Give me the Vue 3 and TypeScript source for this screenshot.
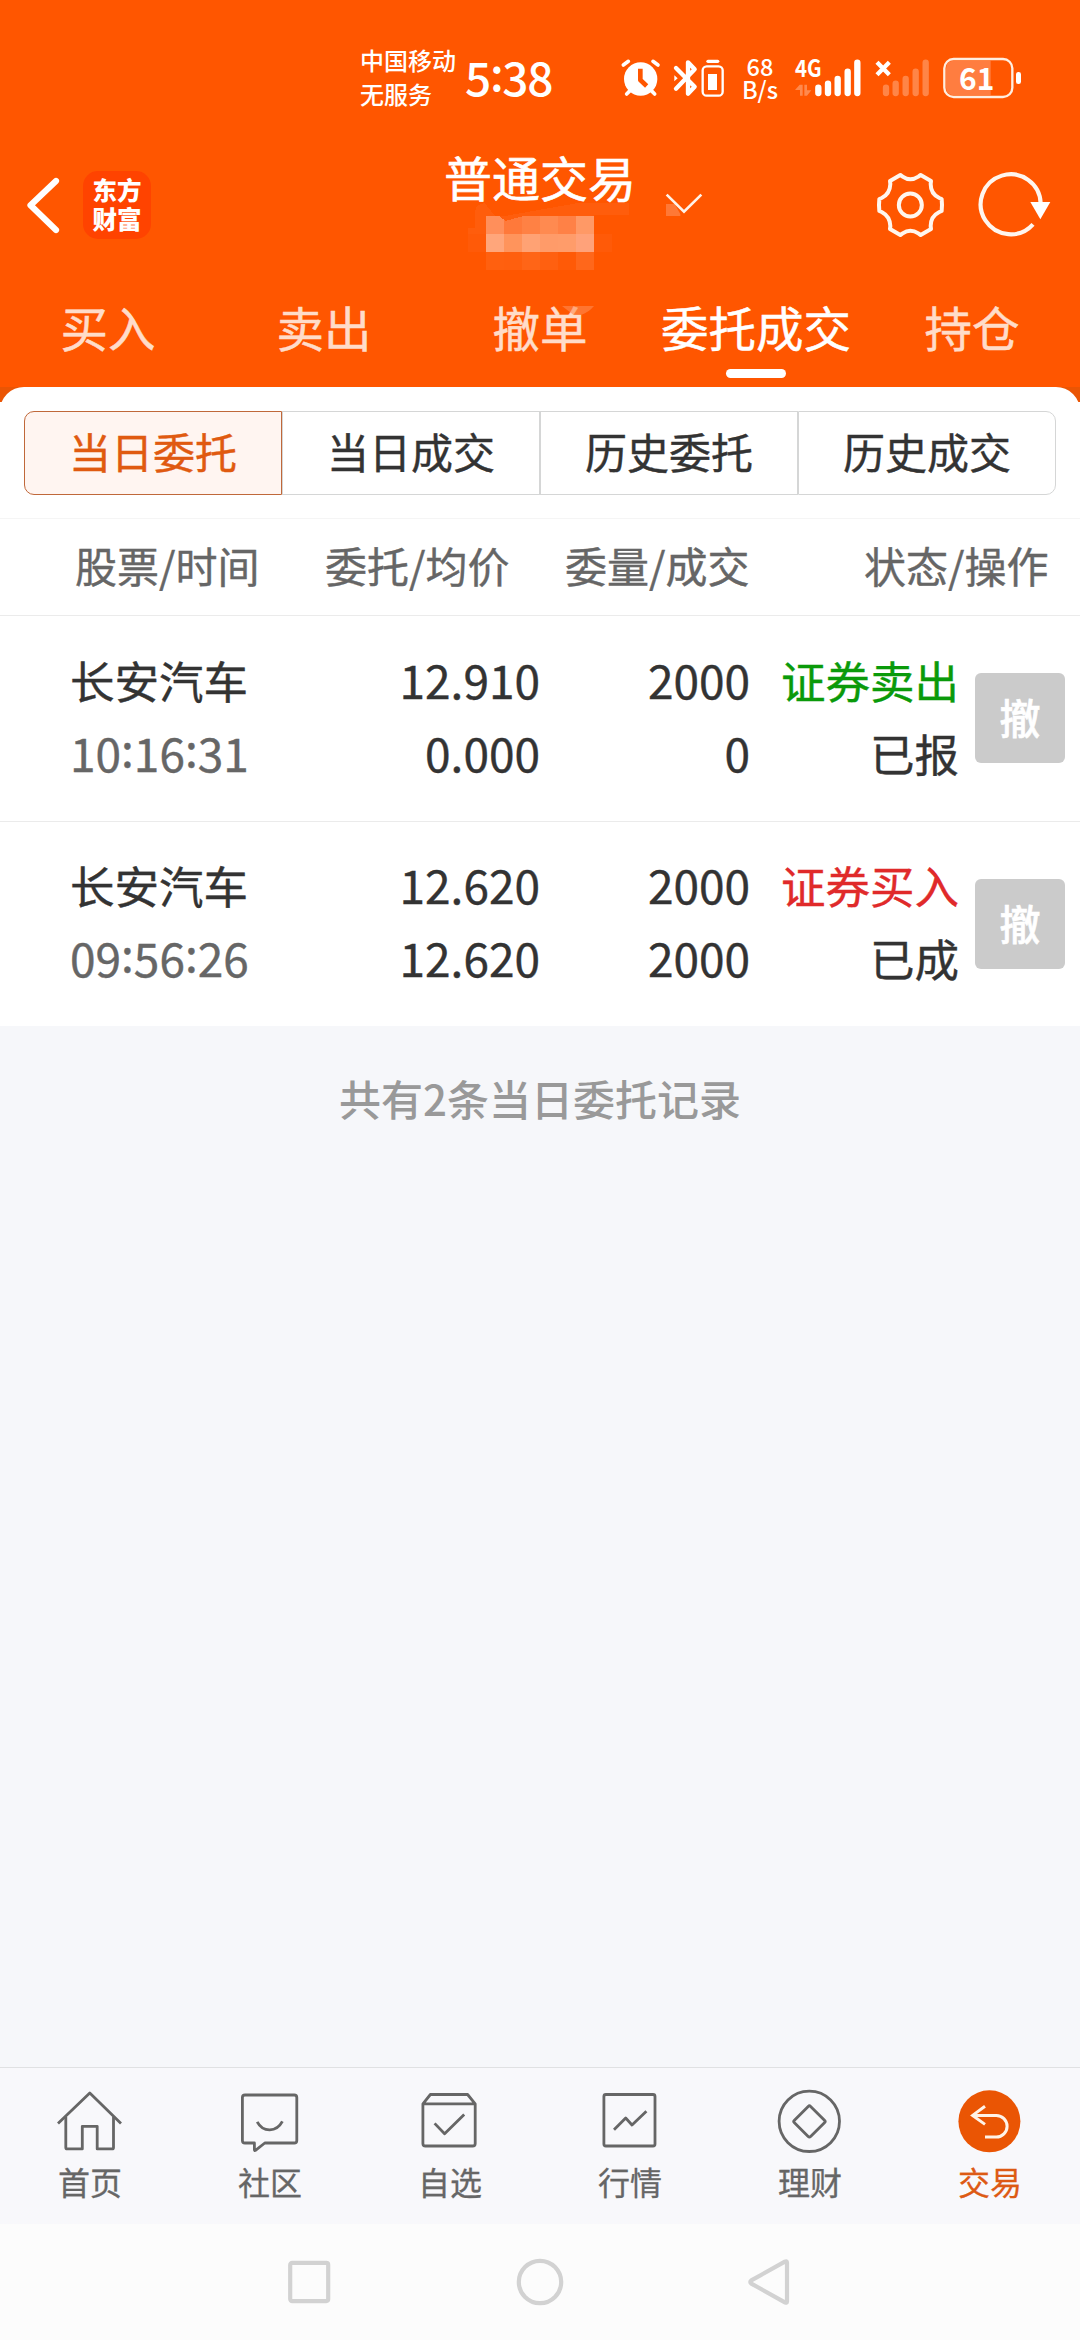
<script setup lang="ts">
import { ref } from 'vue'

interface Order {
  name: string
  time: string
  price: string
  avg: string
  qty: string
  filled: string
  side: string
  kind: 'sell' | 'buy'
  state: string
}

const tabs = ['买入', '卖出', '撤单', '委托成交', '持仓']
const activeTab = ref(3)

const segments = ['当日委托', '当日成交', '历史委托', '历史成交']
const activeSegment = ref(0)

const orders: Order[] = [
  { name: '长安汽车', time: '10:16:31', price: '12.910', avg: '0.000', qty: '2000', filled: '0', side: '证券卖出', kind: 'sell', state: '已报' },
  { name: '长安汽车', time: '09:56:26', price: '12.620', avg: '12.620', qty: '2000', filled: '2000', side: '证券买入', kind: 'buy', state: '已成' },
]

const mosaic = [
  ['#ff8f5b', '#ff793a', '#ff8144', '#ff8a50', '#ff8146', '#ff9966'],
  ['#ffa67b', '#ff945c', '#ffa274', '#ff9b69', '#ff9c6a', '#ffa27a'],
  ['#ff600f', '#ff5f0e', '#ff6517', '#ff6010', '#ff5a07', '#ff671b'],
]

const navItems = ['首页', '社区', '自选', '行情', '理财', '交易']
</script>

<template>
  <div class="screen">
    <header class="top">
      <div class="status">
        <div class="carrier"><span>中国移动</span><span>无服务</span></div>
        <div class="clock">5<i>:</i>38</div>
        <svg class="s-alarm" width="40" height="44" viewBox="60 78 120 132" fill="none" stroke="#fff" stroke-linecap="round">
          <circle cx="122" cy="147" r="50" fill="#fff" stroke="none" />
          <path d="M70 105L85 94M174 105L159 94M80 192L90 182M164 192L154 182" stroke-width="11" />
          <path d="M121 116V150L140 168" stroke="#ff5600" stroke-width="14" stroke-linecap="butt" stroke-linejoin="round" />
        </svg>
        <svg class="s-bt" width="54" height="44" viewBox="216 78 162 132" fill="none" stroke="#fff" stroke-linecap="round" stroke-linejoin="round">
          <path d="M228 114L284 170L264 191V97L284 118L228 176" stroke-width="13" />
          <path d="M223 136L233 145L223 154Z" fill="#fff" stroke="none" />
          <path d="M324 94H353" stroke-width="10" />
          <rect x="308" y="109" width="60" height="88" rx="12" stroke-width="7" />
          <rect x="324" y="132" width="27" height="48" fill="#fff" stroke="none" />
        </svg>
        <div class="speed"><span>68</span><span>B/s</span></div>
        <svg class="s-sig" width="68" height="44" viewBox="582 78 204 132">
          <text x="585" y="142" textLength="80" lengthAdjust="spacingAndGlyphs" class="g4">4G</text>
          <g stroke="#fff" stroke-width="19" stroke-linecap="round">
            <path d="M655 173V189M684 161V189M713 147V189M743 125V189M772 98V189" />
          </g>
          <g fill="#fff" opacity=".3">
            <path d="M585 180L599 164H608V197H600V180ZM613 164H621V181H634L621 197H613Z" />
          </g>
        </svg>
        <svg class="s-sig2" width="56" height="44" viewBox="822 78 168 132">
          <path d="M831 97L868 134M868 97L831 134" stroke="#fff" stroke-width="13" />
          <g stroke="#fff" stroke-width="19" stroke-linecap="round" opacity=".28">
            <path d="M858 173V189M887 161V189M917 147V189M947 125V189M977 98V189" />
          </g>
        </svg>
        <svg class="s-bat" width="80" height="44" viewBox="1026 78 240 132">
          <path d="M1062 92H1172V196H1062Q1038 196 1038 172V116Q1038 92 1062 92Z" fill="#ff7d40" />
          <rect x="1033" y="87" width="204" height="114" rx="28" fill="none" stroke="#ffeee0" stroke-width="7" />
          <rect x="1248" y="126" width="15" height="36" rx="7" fill="#fff" />
          <text x="1077" y="180" textLength="106" lengthAdjust="spacingAndGlyphs" class="bat">61</text>
        </svg>
      </div>

      <div class="titlebar">
        <svg class="back" width="34" height="60" viewBox="26 175 34 60" fill="none" stroke="#fff" stroke-width="6.2" stroke-linecap="round" stroke-linejoin="round">
          <path d="M56 181L30.5 205.3L56 230" />
        </svg>
        <div class="logo"><span>东方</span><span>财富</span></div>
        <div class="title">
          <span>普通交易</span>
          <svg class="mask" width="166" height="61" viewBox="318 207 498 183" shape-rendering="crispEdges">
            <path d="M345 228Q343 190 375 190L405 228H435L660 188H808V226H702V282H324V264H345Z" fill="#ff5d0c" />
            <path d="M702 282H756V336H702ZM324 282H378V336H324Z" fill="#ff5a08" />
            <template v-for="(row, r) in mosaic" :key="r">
              <rect v-for="(c, i) in row" :key="i" :x="378 + i * 54" :y="228 + r * 54" width="54" height="54" :fill="c" />
            </template>
            <path d="M418 228L436 243L490 228Z" fill="#ff5d0c" />
          </svg>
        </div>
        <svg class="caret" width="40" height="26" viewBox="912 156 120 78" fill="none">
          <path d="M918 192H944L961 222V228H918Z" fill="#ff7836" />
          <path d="M920 164L972 215L1024 164" stroke="#fff3ea" stroke-width="8" />
        </svg>
        <svg class="gear" width="72" height="70" viewBox="462 90 216 210" fill="none" stroke="#fff6ee" stroke-width="12" stroke-linejoin="round">
          <path d="M541 105L548 110Q571 126 595 110L602 105L633 123L632 132Q632 162 658 174L665 177Q667 195 665 213L658 216Q632 229 632 258L633 267L602 285L595 280Q571 264 548 280L541 285L510 267L511 258Q510 229 485 216L478 213Q476 195 478 177L485 174Q510 162 511 132L510 123Z" />
          <circle cx="571" cy="195" r="34.5" />
        </svg>
        <svg class="reload" width="76" height="70" viewBox="771 90 228 210" fill="none">
          <path d="M939 253A90 90 0 1 1 962 190" stroke="#fff6ee" stroke-width="12.5" />
          <path d="M931 186H991L961 238Z" fill="#fff" />
        </svg>
      </div>

      <nav class="tabs">
        <div v-for="(t, i) in tabs" :key="t" class="tab" :class="{ on: i === activeTab }" @click="activeTab = i">
          <span>{{ t }}</span>
          <svg v-if="i === 2" class="smudge" width="32" height="9" viewBox="606 498 96 27">
            <path d="M606 498H702Q685 518 665 524H640Z" fill="#ff8a50" opacity=".6" />
          </svg>
        </div>
      </nav>
      <div class="lip"><div class="lip-in"></div></div>
    </header>

    <section class="sheet">
      <div class="segs">
        <div v-for="(s, i) in segments" :key="s" class="seg" :class="{ on: i === activeSegment }" @click="activeSegment = i">{{ s }}</div>
      </div>
      <div class="thead">
        <span>股票/时间</span><span>委托/均价</span><span>委量/成交</span><span>状态/操作</span>
      </div>
      <div v-for="o in orders" :key="o.time" class="row">
        <div class="cell name">
          <span>{{ o.name }}</span>
          <span class="num time"><template v-for="(p, i) in o.time.split(':')" :key="i"><i v-if="i">:</i>{{ p }}</template></span>
        </div>
        <div class="cell price num"><span>{{ o.price }}</span><span>{{ o.avg }}</span></div>
        <div class="cell qty num"><span>{{ o.qty }}</span><span>{{ o.filled }}</span></div>
        <div class="cell state"><span :class="o.kind">{{ o.side }}</span><span>{{ o.state }}</span></div>
        <button class="cancel">撤</button>
      </div>
    </section>

    <main class="rest">共有2条当日委托记录</main>

    <nav class="bottom">
      <div v-for="(n, i) in navItems" :key="n" class="item" :class="{ on: i === 5 }">
        <svg width="72" height="72" viewBox="0 0 72 72" fill="none" stroke="#666" stroke-width="2.8" stroke-linejoin="round">
          <template v-if="i === 0">
            <path d="M4 38.6L35.8 8L67 38.6" />
            <path d="M11.8 32V62.4q0 1.5 1.5 1.5H28.3V41.3H43.2V63.9H58q1.5 0 1.5-1.5V32" />
          </template>
          <template v-else-if="i === 1">
            <path d="M11 10H60.2q2.6 0 2.6 2.6V55.4q0 2.6-2.6 2.6H30.8L21.5 65.3Q20.4 66 20.4 64.6V58H11q-2.6 0-2.6-2.6V12.6Q8.4 10 11 10Z" />
            <path d="M23.2 36.8C29 47.6 42.4 47.6 48.4 36.4" />
          </template>
          <template v-else-if="i === 2">
            <path d="M8.9 18.8L16.4 9.5H53.6L61.2 18.8V58.4q0 2.6-2.6 2.6H11.5q-2.6 0-2.6-2.6ZM8.9 18.8H61.2" />
            <path d="M20.6 38.4L30.6 48.8L50.2 29.4" />
          </template>
          <template v-else-if="i === 3">
            <rect x="9.9" y="9.5" width="51.1" height="51.5" rx="2" />
            <path d="M20 44.7L31.7 33L38 40L52.4 26.2" />
          </template>
          <template v-else-if="i === 4">
            <circle cx="35.3" cy="36.3" r="30.2" />
            <path d="M34.2 21.4q1.2-1.2 2.4 0L50.7 35.4q1 1 0 2L36.6 51.4q-1.2 1.2-2.4 0L20.2 37.4q-1-1 0-2Z" />
          </template>
          <template v-else>
            <circle cx="35.4" cy="36.3" r="31" fill="#ea5504" stroke="none" />
            <path d="M31 21.3L18.6 30.4L31 39.4M19 30.4H42.3a10.8 10.8 0 0 1 0 21.6H31" stroke="#fff3e8" stroke-width="3" stroke-linejoin="miter" />
          </template>
        </svg>
        <span>{{ n }}</span>
      </div>
    </nav>

    <footer class="sys">
      <svg width="48" height="52" viewBox="0 0 48 52" fill="none" stroke="#d2d2d2" stroke-width="4.2" stroke-linejoin="round">
        <rect x="5.2" y="6.9" width="38" height="38.2" rx="2" />
      </svg>
      <svg width="48" height="52" viewBox="0 0 48 52" fill="none" stroke="#d2d2d2" stroke-width="4.2">
        <circle cx="24" cy="26" r="21.2" />
      </svg>
      <svg width="48" height="52" viewBox="0 0 48 52" fill="none" stroke="#d2d2d2" stroke-width="4.2" stroke-linejoin="round">
        <path d="M40 6.6V45.4Q40 47.4 37.9 46.4L4.3 27.6Q2.3 26 4.3 24.4L37.9 5.6Q40 4.6 40 6.6Z" />
      </svg>
    </footer>
  </div>
</template>

<style>
body {
  margin: 0;
}
</style>

<style scoped>
.screen {
  display: flex;
  flex-direction: column;
  width: 1080px;
  height: 2340px;
  overflow: hidden;
  background: #f6f7fa;
  color: #333;
  font-family: 'Noto Sans CJK SC', 'Noto Sans', sans-serif;
  font-weight: 400;
}
svg {
  display: block;
  flex: none;
  overflow: visible;
}
i {
  font-style: normal;
  vertical-align: 5px;
  line-height: 1;
}
.top {
  background: #ff5600;
  color: #fff;
}
.status {
  display: flex;
  align-items: flex-start;
  box-sizing: border-box;
  height: 140px;
  padding: 43px 0 0 360px;
}
.carrier {
  display: flex;
  flex-direction: column;
  width: 105px;
  font-size: 24px;
  line-height: 34px;
  font-weight: 500;
}
.clock {
  width: 155px;
  font-size: 46px;
  line-height: 66px;
  font-weight: 500;
  letter-spacing: -1.3px;
}
.s-alarm,
.s-bt,
.s-sig,
.s-sig2,
.s-bat {
  margin-top: 13px;
}
.s-bt {
  margin-left: 12px;
}
.speed {
  display: flex;
  flex-direction: column;
  align-items: center;
  width: 40px;
  margin: 12px 0 0 14px;
  font-size: 23.5px;
  line-height: 23px;
  font-weight: 500;
}
.s-sig {
  margin-left: 14px;
}
.s-sig2,
.s-bat {
  margin-left: 12px;
}
.g4 {
  font-size: 70px;
  font-weight: 700;
  fill: #fff;
}
.bat {
  font-size: 92px;
  font-weight: 700;
  fill: #fff;
}
.titlebar {
  display: flex;
  align-items: center;
  height: 130px;
  padding-left: 26px;
}
.logo {
  display: flex;
  flex-direction: column;
  align-items: center;
  justify-content: center;
  box-sizing: border-box;
  width: 68px;
  height: 68px;
  margin-left: 23px;
  padding-bottom: 2px;
  border-radius: 15px;
  background: #ff4300;
  font-size: 24.5px;
  line-height: 29px;
  font-weight: 900;
}
.title {
  display: flex;
  flex-direction: column;
  align-items: center;
  align-self: flex-start;
  width: 192px;
  margin: 6px 0 0 293px;
  font-size: 48px;
  line-height: 60px;
  white-space: nowrap;
  -webkit-text-stroke: 0.6px currentColor;
}
.mask {
  margin: 3px 0 0 18px;
}
.title span {
  position: relative;
  z-index: 1;
}
.caret {
  margin-left: 28px;
}
.gear {
  margin-left: 170px;
}
.reload {
  margin-left: 31px;
}
.tabs {
  display: flex;
  height: 117px;
}
.tab {
  position: relative;
  display: flex;
  flex-direction: column;
  align-items: center;
  width: 216px;
  padding-top: 27px;
  font-size: 47.5px;
  line-height: 60px;
  color: #ffdcc9;
  -webkit-text-stroke: 0.5px currentColor;
}
.tab.on {
  color: #fff;
}
.tab.on::after {
  content: '';
  width: 60px;
  height: 9px;
  margin-top: 12px;
  border-radius: 5px;
  background: #fff;
}
.smudge {
  position: absolute;
  left: 130px;
  top: 36px;
}
.lip {
  height: 15px;
  overflow: hidden;
  background: #ea5504;
}
.lip-in {
  height: 40px;
  border-radius: 24px 24px 0 0;
  background: #fff;
}
.sheet {
  background: #fff;
  -webkit-text-stroke: 0.4px currentColor;
}
.segs {
  display: flex;
  height: 84px;
  padding: 9px 24px 23px;
}
.seg {
  box-sizing: border-box;
  width: 258px;
  height: 84px;
  border: 1px solid #d5d6d6;
  font-size: 42px;
  line-height: 78px;
  text-align: center;
}
.seg:first-child {
  border-radius: 10px 0 0 10px;
}
.seg:last-child {
  border-radius: 0 10px 10px 0;
}
.seg.on {
  border-color: #c0683a;
  background: #fff5f1;
  color: #e05a10;
}
.thead {
  display: grid;
  grid-template-columns: 250px 240px 299px 1fr;
  box-sizing: border-box;
  height: 98px;
  padding-left: 75px;
  border-top: 1px solid #f5f5f5;
  border-bottom: 1px solid #ebebeb;
  color: #666;
  font-size: 42px;
  line-height: 92px;
}
.row {
  display: flex;
  align-items: center;
  box-sizing: border-box;
  height: 205px;
  padding-left: 70px;
}
.row + .row {
  border-top: 1px solid #ebebeb;
}
.cell {
  display: flex;
  flex-direction: column;
  padding-bottom: 6px;
  font-size: 44.5px;
  line-height: 73px;
  white-space: nowrap;
}
.num {
  font-size: 46px;
}
.name {
  width: 230px;
}
.time {
  color: #666;
}
.price {
  width: 240px;
  align-items: flex-end;
}
.qty {
  width: 210px;
  align-items: flex-end;
}
.state {
  width: 209px;
  align-items: flex-end;
}
.sell {
  color: #0a9a0a;
}
.buy {
  color: #e02a2a;
}
.cancel {
  width: 90px;
  height: 90px;
  margin: 0 0 1px 16px;
  padding: 0 0 4px;
  border: 0;
  border-radius: 6px;
  background: #cbcbcb;
  color: #fff;
  font: 500 41px/86px 'Noto Sans CJK SC', sans-serif;
  -webkit-text-stroke: 0.6px #fff;
}
.rest {
  flex: 1;
  padding-top: 41px;
  color: #999;
  font-size: 42px;
  line-height: 62px;
  font-weight: 500;
  text-align: center;
}
.bottom {
  display: flex;
  box-sizing: border-box;
  height: 157px;
  border-top: 1px solid #e0e1e3;
  background: #f8f8fb;
}
.item {
  display: flex;
  flex-direction: column;
  align-items: center;
  width: 180px;
  padding-top: 17px;
  font-size: 32px;
  line-height: 40px;
  color: #666;
  -webkit-text-stroke: 0.3px currentColor;
}
.item span {
  margin-top: 4px;
}
.item.on {
  color: #dd5a14;
}
.sys {
  display: flex;
  align-items: center;
  justify-content: center;
  gap: 183px;
  height: 116px;
  background: #fcfcfc;
}
</style>
